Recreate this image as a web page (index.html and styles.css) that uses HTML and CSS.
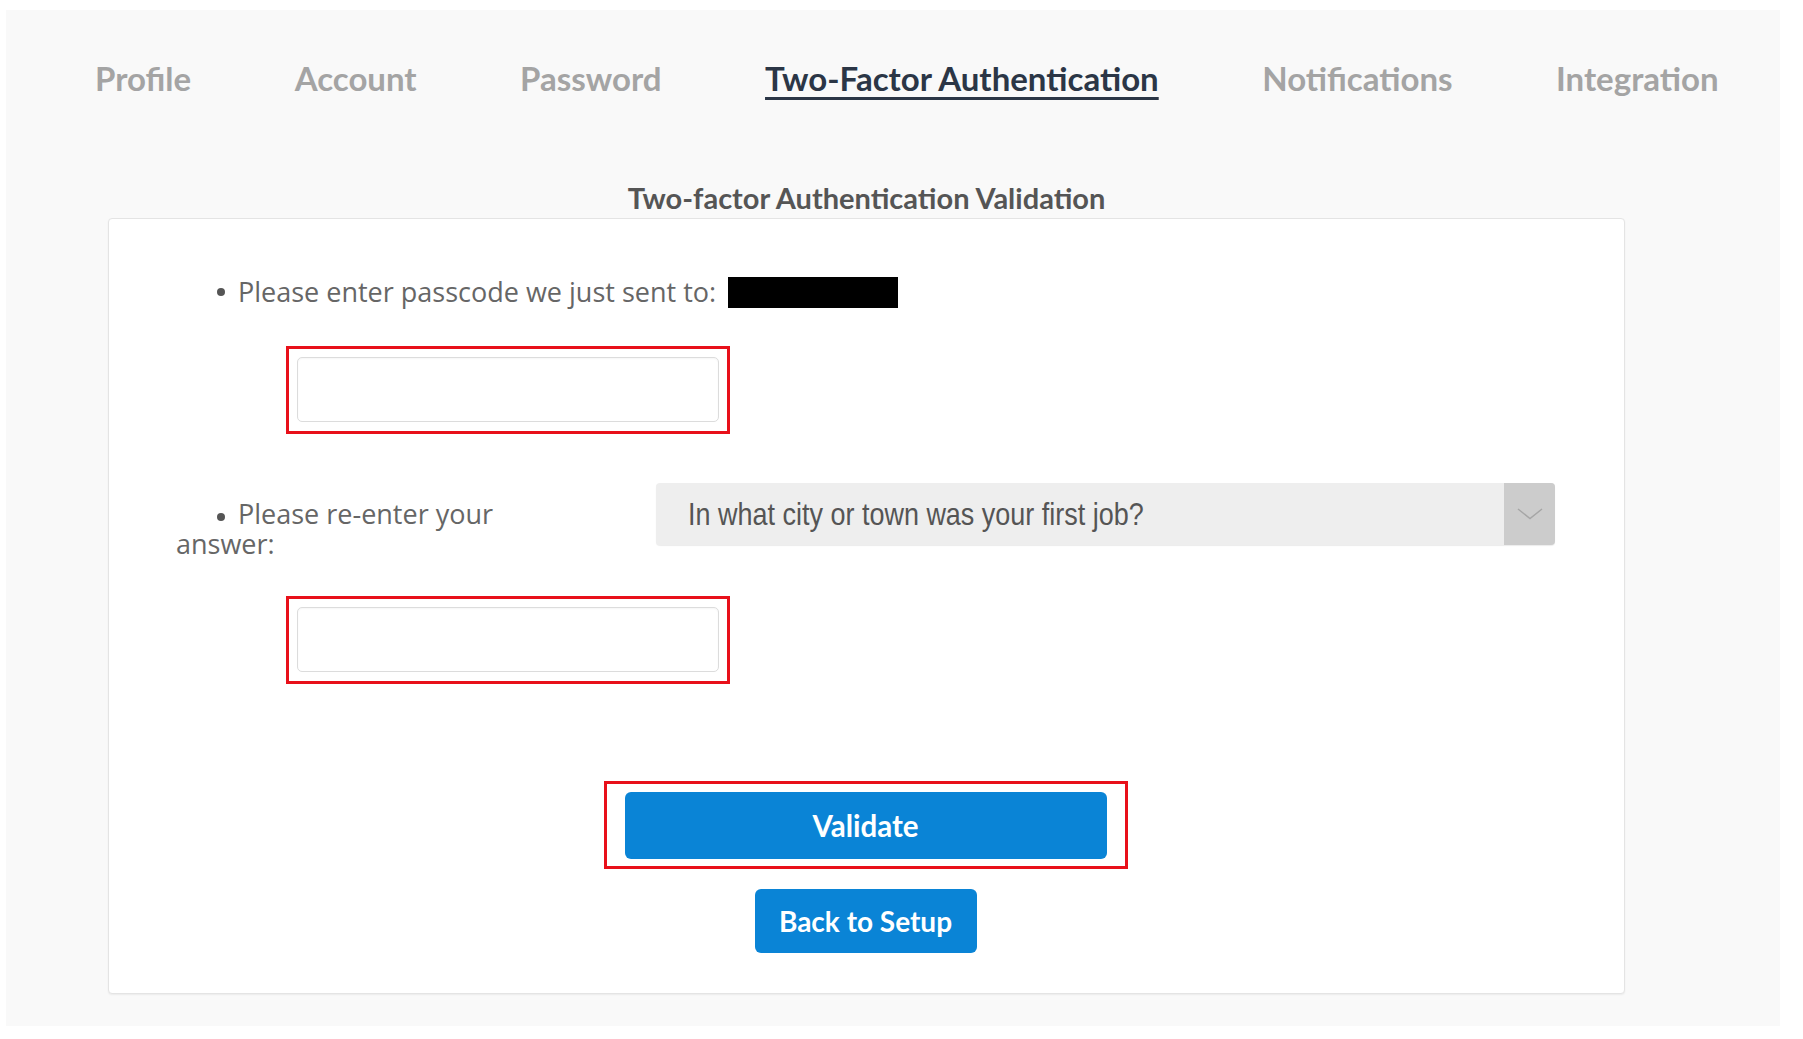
FILE: index.html
```html
<!DOCTYPE html>
<html lang="en">
<head>
<meta charset="utf-8">
<title>Two-Factor Authentication</title>
<link rel="stylesheet" href="styles.css">
</head>
<body>
<div class="panel">
  <nav class="tabs">
    <a class="tab">Profile</a>
    <a class="tab">Account</a>
    <a class="tab">Password</a>
    <a class="tab active">Two-Factor Authentication</a>
    <a class="tab">Notifications</a>
    <a class="tab">Integration</a>
  </nav>
  <section class="content">
    <h2 class="title">Two-factor Authentication Validation</h2>
    <div class="card">
      <div class="row-passcode">
        <span class="bullet"></span>
        <span class="label">Please enter passcode we just sent to:</span>
        <span class="redacted"></span>
      </div>
      <div class="highlight field-box">
        <input class="text-input" type="text">
      </div>
      <div class="row-question">
        <div class="label label-wrap"><span class="bullet"></span>Please re-enter your answer:</div>
        <div class="select">
          <span class="select-value"><span class="select-text">In what city or town was your first job?</span></span>
          <span class="select-arrow">
            <svg width="26" height="12" viewBox="0 0 26 12"><path d="M1 1 L13 10.5 L25 1" fill="none" stroke="#a6a6a6" stroke-width="1.5"/></svg>
          </span>
        </div>
      </div>
      <div class="highlight field-box">
        <input class="text-input" type="text">
      </div>
      <div class="actions">
        <div class="highlight btn-box">
          <button class="btn btn-wide">Validate</button>
        </div>
        <button class="btn btn-back">Back to Setup</button>
      </div>
    </div>
  </section>
</div>
</body>
</html>
```

FILE: styles.css
```css
html, body {
  margin: 0;
  padding: 0;
  background: #ffffff;
}

body {
  font-family: Lato, "Open Sans", "Liberation Sans", sans-serif;
}

.panel {
  margin: 10px 23px 13px 6px;
  height: 1016px;
  background: #f9f9f9;
  box-sizing: border-box;
  padding-top: 48px;
}

.tabs {
  display: flex;
  gap: 103.5px;
  padding-left: 89px;
  height: 40px;
}

.tab {
  font-size: 33px;
  line-height: 40px;
  color: #a4a4a4;
  font-weight: 700;
  white-space: nowrap;
}

.tab.active {
  color: #2b3646;
  text-decoration: underline;
  text-decoration-thickness: 3px;
  text-underline-offset: 6px;
}

.content {
  margin-left: 102px;
  width: 1517px;
}

.title {
  margin: 83px 0 3px;
  text-align: center;
  font-size: 29px;
  line-height: 34px;
  font-weight: 700;
  color: #555555;
}

.card {
  background: #ffffff;
  border: 1px solid #e4e4e4;
  border-radius: 4px;
  box-shadow: 0 1px 2px rgba(0, 0, 0, 0.06);
  padding: 58px 69px 40px 67px;
  display: flex;
  flex-direction: column;
  align-items: flex-start;
}

.label {
  font-family: "Open Sans", Lato, sans-serif;
  font-size: 27px;
  line-height: 30px;
  color: #666666;
}

.bullet {
  display: inline-block;
  width: 8px;
  height: 8px;
  border-radius: 50%;
  background: #555555;
  margin-right: 13px;
  vertical-align: middle;
}

.row-passcode {
  display: flex;
  align-items: center;
  padding-left: 41px;
  height: 30px;
}

.row-passcode .label {
  white-space: nowrap;
}

.redacted {
  display: inline-block;
  width: 170px;
  height: 31px;
  background: #000000;
  margin-left: 12px;
}

.highlight {
  border: 3px solid #e8101a;
  box-sizing: border-box;
}

.field-box {
  margin-left: 110px;
  margin-top: 39px;
  width: 444px;
  height: 88px;
  padding: 8px;
}

.text-input {
  display: block;
  width: 100%;
  height: 65px;
  box-sizing: border-box;
  border: 1px solid #dcdcdc;
  border-radius: 5px;
  background: #ffffff;
  box-shadow: inset 0 1px 2px rgba(0, 0, 0, 0.04);
  margin: 0;
}

.row-question {
  display: grid;
  grid-template-columns: 340px 1fr;
  column-gap: 140px;
  align-self: stretch;
  margin-top: 49px;
  height: 76px;
}

.row-question + .field-box {
  margin-top: 37px;
}

.label-wrap {
  padding-top: 16px;
}

.label-wrap .bullet {
  margin-left: 41px;
}

.select {
  display: flex;
  align-items: center;
  height: 62px;
  background: #eeeeee;
  border-radius: 4px;
  box-shadow: 0 1px 1px rgba(0, 0, 0, 0.08);
  overflow: hidden;
}

.select-value {
  flex: 1;
  padding-left: 32px;
  overflow: hidden;
}

.select-text {
  display: inline-block;
  font-family: "Liberation Sans", Arial, sans-serif;
  font-size: 32px;
  color: #555555;
  white-space: nowrap;
  transform: scaleX(0.843);
  transform-origin: left center;
}

.select-arrow {
  width: 51px;
  height: 100%;
  background: #cccccc;
  display: flex;
  align-items: center;
  justify-content: center;
}

.actions {
  align-self: stretch;
  display: flex;
  flex-direction: column;
  align-items: center;
  margin-top: 97px;
}

.btn-box {
  width: 524px;
  height: 88px;
  padding: 8px 18px 7px;
}

.btn {
  font-family: Lato, "Open Sans", sans-serif;
  font-weight: 700;
  font-size: 28px;
  color: #ffffff;
  background: #0a84d6;
  border: none;
  border-radius: 6px;
  margin: 0;
  cursor: pointer;
}

.btn-wide {
  display: block;
  width: 100%;
  height: 67px;
  font-size: 29.5px;
}

.btn-back {
  margin-top: 20px;
  width: 222px;
  height: 64px;
  padding: 0;
}
```
